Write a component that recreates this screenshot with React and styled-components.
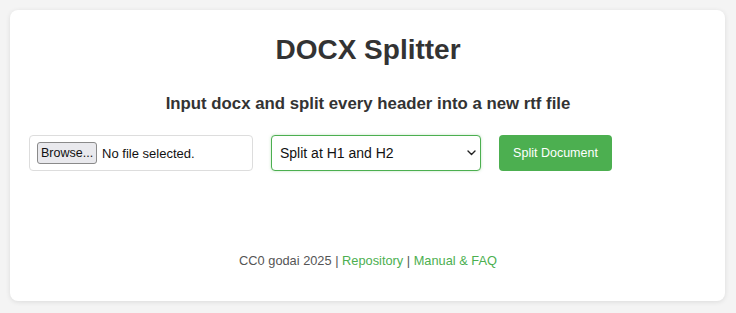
import React from 'react'
import styled, { createGlobalStyle } from 'styled-components'

const GlobalStyle = createGlobalStyle`
  html, body {
    margin: 0;
    padding: 0;
    background: #f4f4f4;
  }
  body {
    font-family: "Liberation Sans", Arial, Helvetica, sans-serif;
    color: #333;
  }
`

const Page = styled.div`
  padding: 10px 11px 12px 10px;
`

const Card = styled.div`
  background: #fff;
  border-radius: 8px;
  box-shadow: 0 1px 5px rgba(0, 0, 0, 0.1);
  padding: 20px 18px 30px 19px;
`

const Title = styled.h1`
  margin: 0;
  font-size: 28px;
  line-height: 40px;
  font-weight: bold;
  text-align: center;
  color: #333;
`

const Subtitle = styled.h2`
  margin: 22px 0 0;
  font-size: 16.8px;
  line-height: 24px;
  font-weight: bold;
  text-align: center;
  color: #333;
`

const Controls = styled.div`
  display: flex;
  align-items: center;
  gap: 18px;
  margin-top: 19px;
`

const FileBox = styled.label`
  display: flex;
  align-items: center;
  gap: 5px;
  box-sizing: border-box;
  width: 224px;
  height: 36px;
  padding: 0 7px;
  border: 1px solid #ddd;
  border-radius: 4px;
  font-size: 13px;
  color: #111;
  cursor: pointer;

  input {
    display: none;
  }
`

const BrowseButton = styled.span`
  display: inline-flex;
  align-items: center;
  height: 20px;
  padding: 0 3px;
  border: 1px solid #8a8a8a;
  border-radius: 3px;
  background: #e9e9ed;
  color: #111;
  font-size: 12.5px;
`

const SelectWrap = styled.div`
  position: relative;
  width: 210px;
  height: 36px;
`

const Select = styled.select`
  appearance: none;
  box-sizing: border-box;
  width: 100%;
  height: 100%;
  padding: 0 24px 0 8px;
  border: 1px solid #4caf50;
  border-radius: 4px;
  box-shadow: 0 0 3px rgba(76, 175, 80, 0.35);
  background: #fff;
  font-family: inherit;
  font-size: 14px;
  color: #111;
  outline: none;
`

const Chevron = styled.svg`
  position: absolute;
  right: 5px;
  top: 15px;
  pointer-events: none;
`

const SplitButton = styled.button`
  box-sizing: border-box;
  width: 113px;
  height: 36px;
  border: none;
  border-radius: 4px;
  background: #4caf50;
  color: #fff;
  font-family: inherit;
  font-size: 12.5px;
  cursor: pointer;
`

const Footer = styled.footer`
  margin-top: 80px;
  text-align: center;
  font-size: 12.8px;
  line-height: 20px;
  color: #555;
`

const FooterLink = styled.a`
  color: #4caf50;
  text-decoration: none;
`

export default function App() {
  return (
    <Page>
      <GlobalStyle />
      <Card>
        <Title>DOCX Splitter</Title>
        <Subtitle>Input docx and split every header into a new rtf file</Subtitle>
        <Controls>
          <FileBox>
            <input type="file" accept=".docx" />
            <BrowseButton>Browse...</BrowseButton>
            <span>No file selected.</span>
          </FileBox>
          <SelectWrap>
            <Select defaultValue="h1h2">
              <option value="h1">Split at H1</option>
              <option value="h1h2">Split at H1 and H2</option>
              <option value="h1h2h3">Split at H1, H2 and H3</option>
            </Select>
            <Chevron width="9" height="6" viewBox="0 0 9 6">
              <path d="M1 1l3.5 3.5L8 1" fill="none" stroke="#222" strokeWidth="1.4" strokeLinecap="round" strokeLinejoin="round" />
            </Chevron>
          </SelectWrap>
          <SplitButton>Split Document</SplitButton>
        </Controls>
        <Footer>
          CC0 godai 2025 | <FooterLink href="#">Repository</FooterLink> |{' '}
          <FooterLink href="#">Manual &amp; FAQ</FooterLink>
        </Footer>
      </Card>
    </Page>
  )
}
